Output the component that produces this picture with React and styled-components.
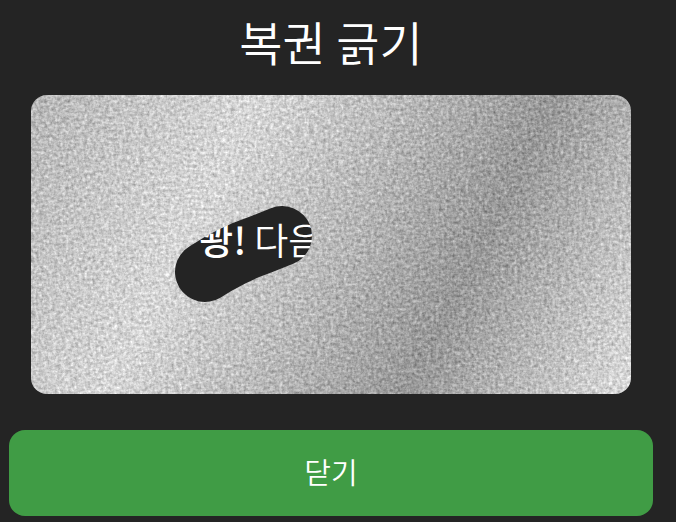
import React from 'react';
import styled, { createGlobalStyle } from 'styled-components';

const GlobalStyle = createGlobalStyle`
  body {
    margin: 0;
    background-color: #242424;
    color: #ffffff;
    font-family: 'Noto Sans CJK KR', sans-serif;
  }
`;

const Modal = styled.main`
  display: flex;
  flex-direction: column;
  padding: 8px 23px 6px 9px;
`;

const Title = styled.h1`
  margin: 0 0 22px;
  font-size: 47px;
  font-weight: 350;
  line-height: 65px;
  text-align: center;
`;

const ScratchCard = styled.section`
  display: grid;
  margin: 0 22px 36px;
  border-radius: 16px;
  overflow: hidden;

  > * {
    grid-area: 1 / 1;
  }
`;

const Result = styled.p`
  align-self: center;
  margin: 0;
  padding-bottom: 12px;
  font-size: 37px;
  font-weight: 350;
  line-height: 56px;
  text-align: center;
  white-space: nowrap;

  strong {
    font-weight: 500;
  }
`;

const Cover = styled.svg`
  display: block;
  width: 100%;
  height: auto;
`;

const CloseButton = styled.button`
  padding: 18px 20px 22px;
  border: none;
  border-radius: 16px;
  background-color: #409c45;
  color: #ffffff;
  font-family: inherit;
  font-size: 29px;
  font-weight: 350;
  line-height: 46px;
  cursor: pointer;

  &:hover {
    background-color: #388e3c;
  }
`;

const stops = [
  { offset: 0, color: '#b6b6b6' },
  { offset: 0.3, color: '#d6d6d6' },
  { offset: 0.5, color: '#b9b9b9' },
  { offset: 0.7, color: '#989898' },
  { offset: 1, color: '#dcdcdc' },
];

function ScratchCover() {
  return (
    <Cover viewBox="0 0 600 299" aria-hidden="true">
      <defs>
        <linearGradient id="silver" gradientUnits="userSpaceOnUse" x1="0" y1="0" x2="600" y2="299">
          {stops.map((stop) => (
            <stop key={stop.offset} offset={stop.offset} stopColor={stop.color} />
          ))}
        </linearGradient>
        <filter id="grain" x="0" y="0" width="100%" height="100%" colorInterpolationFilters="sRGB">
          <feTurbulence type="fractalNoise" baseFrequency="0.23 0.37" numOctaves="3" seed="11" result="wide" />
          <feTurbulence type="fractalNoise" baseFrequency="0.37 0.23" numOctaves="3" seed="29" result="tall" />
          <feComposite in="wide" in2="tall" operator="arithmetic" k1="0" k2="0.5" k3="0.5" k4="0" />
          <feColorMatrix
            type="matrix"
            values="1 0 0 0 0  1 0 0 0 0  1 0 0 0 0  0 0 0 0 1"
          />
          <feGaussianBlur stdDeviation="0.5" result="noise" />
          <feComposite in="SourceGraphic" in2="noise" operator="arithmetic" k1="0" k2="1" k3="0.6" k4="-0.3" />
        </filter>
        {/* black area is what has been scratched off */}
        <mask id="scratched" maskUnits="userSpaceOnUse" x="0" y="0" width="600" height="299">
          <rect width="600" height="299" fill="white" />
          <path
            d="M174 177 L187 169 L200 162 L215 155 L231 149 L241 145 L251 141"
            fill="none"
            stroke="black"
            strokeWidth="60"
            strokeLinecap="round"
            strokeLinejoin="round"
          />
        </mask>
      </defs>
      <g mask="url(#scratched)">
        <rect width="600" height="299" fill="url(#silver)" filter="url(#grain)" />
      </g>
    </Cover>
  );
}

function App() {
  return (
    <>
      <GlobalStyle />
      <Modal>
        <Title>복권 긁기</Title>
        <ScratchCard>
          <Result>
            <strong>꽝!</strong> 다음 기회에...
          </Result>
          <ScratchCover />
        </ScratchCard>
        <CloseButton type="button">닫기</CloseButton>
      </Modal>
    </>
  );
}

export default App;
